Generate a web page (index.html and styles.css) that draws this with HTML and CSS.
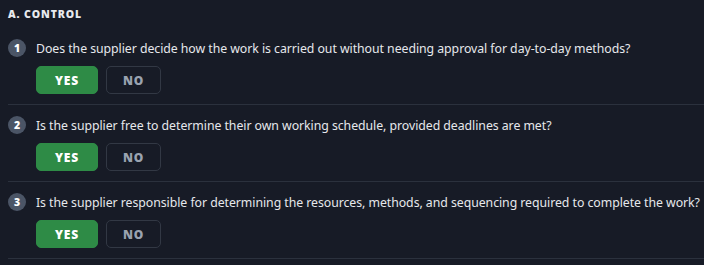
FILE: index.html
```html
<!DOCTYPE html>
<html>
  <head>
    <link rel="stylesheet" href="styles.css">
  </head>
  <body>
    <div class="section">
      <div class="section-title">A. Control</div>

      <div class="question">
        <div class="question-head">
          <div class="question-num">1</div>
          <div class="question-text">Does the supplier decide how the work is carried out without needing approval for day-to-day methods?</div>
        </div>
        <div class="answers">
          <button class="answer answer_yes">Yes</button>
          <button class="answer">No</button>
        </div>
      </div>

      <div class="question">
        <div class="question-head">
          <div class="question-num">2</div>
          <div class="question-text">Is the supplier free to determine their own working schedule, provided deadlines are met?</div>
        </div>
        <div class="answers">
          <button class="answer answer_yes">Yes</button>
          <button class="answer">No</button>
        </div>
      </div>

      <div class="question">
        <div class="question-head">
          <div class="question-num">3</div>
          <div class="question-text">Is the supplier responsible for determining the resources, methods, and sequencing required to complete the work?</div>
        </div>
        <div class="answers">
          <button class="answer answer_yes">Yes</button>
          <button class="answer">No</button>
        </div>
      </div>
    </div>
  </body>
</html>
```

FILE: styles.css
```css
:root {
  background: #171b26;
}

body {
  margin: 0;
  padding: 0 0 0 8px;
  font-family: "Noto Sans", "Open Sans", sans-serif;
  color: #e6e8ec;
}

.section-title {
  height: 28px;
  padding-top: 7px;
  box-sizing: border-box;
  font-family: "Open Sans", sans-serif;
  font-size: 10.5px;
  font-weight: 800;
  letter-spacing: 0.9px;
  text-transform: uppercase;
  color: #e8eaee;
}

.question {
  padding: 11px 0 10px;
  border-bottom: 1px solid #2b313d;
}

.question-head {
  display: flex;
  align-items: center;
  gap: 10px;
  height: 18px;
  margin-bottom: 9px;
}

.question-num {
  width: 18px;
  height: 18px;
  border-radius: 50%;
  background: #4b5566;
  color: #ffffff;
  font-family: "Open Sans", sans-serif;
  font-size: 10.5px;
  font-weight: 800;
  display: flex;
  align-items: center;
  justify-content: center;
  flex-shrink: 0;
}

.question-text {
  font-size: 12.3px;
  letter-spacing: -0.05px;
  white-space: nowrap;
}

.answers {
  display: flex;
  gap: 8px;
  padding-left: 28px;
}

.answer {
  height: 28px;
  width: 55px;
  border: 1px solid #323844;
  border-radius: 5px;
  background: transparent;
  color: #9aa3b0;
  font-family: "Open Sans", sans-serif;
  font-size: 12px;
  font-weight: 800;
  letter-spacing: 0.8px;
  text-transform: uppercase;
  padding: 0;
}

.answer_yes {
  width: 62px;
  background: #2e8b46;
  border-color: #2e8b46;
  color: #ffffff;
}
```
